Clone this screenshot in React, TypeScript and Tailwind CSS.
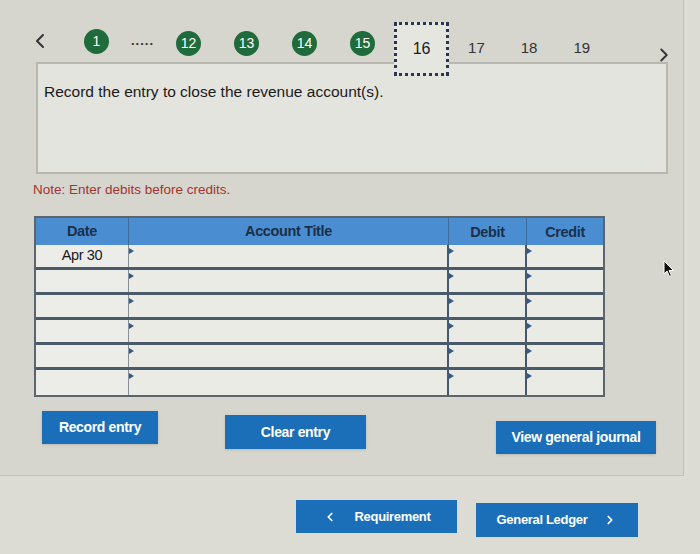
import { ChevronLeft, ChevronRight } from 'lucide-react'

const steps = ['12', '13', '14', '15']

function Circle({ n }: { n: string }) {
  return (
    <div className="w-[25px] h-[25px] rounded-full bg-[#1f6b3b] text-white text-[14px] flex items-center justify-center">
      {n}
    </div>
  )
}

function Cell({ w, last }: { w: string; last?: boolean }) {
  return (
    <div className={`${w} relative h-full bg-[#ebebe6] ${last ? '' : 'border-r-2 border-[#45576a]'}`}>
      {/* input marker */}
      <span className="absolute left-0 top-[3px] w-0 h-0 border-y-[3px] border-y-transparent border-l-[5px] border-l-[#2f5a8a]" />
    </div>
  )
}

export default function App() {
  const rows = ['Apr 30', '', '', '', '', '']

  return (
    <div className="w-[700px] h-[554px] bg-[#dcdcd5] font-['Liberation_Sans',Arial,sans-serif] text-[#1a1a1a] overflow-hidden relative">
      <div className="bg-[#d6d6ce] h-[476px] border-b border-r border-[#c2c2ba] w-[684px] pt-[14px]">
        {/* step navigation */}
        <div className="flex items-center h-[54px] pl-[28px] relative z-10">
          <ChevronLeft className="w-[24px] h-[24px] text-[#333]" strokeWidth={2} />
          <div className="ml-[32px]"><Circle n="1" /></div>
          <div className="ml-[22px] text-[#333] text-[13px] font-bold tracking-[1px]">.....</div>
          <div className="ml-[22px] flex gap-[33px] mt-[4px]">
            {steps.map((s) => (
              <Circle key={s} n={s} />
            ))}
          </div>
          <div className="ml-[19px] mt-[16px] w-[55px] h-[54px] bg-[#e6e6e1] border-[3px] border-dotted border-[#2a3550] flex items-center justify-center text-[16px]">
            16
          </div>
          <div className="ml-[19px] mt-[14px] flex gap-[36px] text-[15px] text-[#333]">
            <span>17</span>
            <span>18</span>
            <span>19</span>
          </div>
          <ChevronRight className="ml-auto mr-[8px] mt-[28px] w-[22px] h-[22px] text-[#333]" strokeWidth={2} />
        </div>

        {/* question */}
        <div className="ml-[36px] -mt-[6px] w-[632px] h-[112px] bg-[#e4e4df] border-2 border-[#b8b8b0] px-[6px] pt-[16px] text-[15.5px]">
          Record the entry to close the revenue account(s).
        </div>
        <div className="ml-[33px] mt-[6px] text-[13.5px] text-[#a5322e]">Note: Enter debits before credits.</div>

        {/* journal table */}
        <div className="ml-[34px] mt-[16px] w-[571px] border-2 border-[#5c6470]">
          <div className="flex h-[27px] bg-[#4a8ed1] text-[14.5px] font-bold text-[#1c2f4a] tracking-tight">
            <div className="w-[93px] flex items-center justify-center border-r border-[#3b6c9c]">Date</div>
            <div className="w-[320px] flex items-center justify-center border-r border-[#3b6c9c]">Account Title</div>
            <div className="w-[78px] flex items-end justify-center pb-[2px] border-r border-[#3b6c9c]">Debit</div>
            <div className="flex-1 flex items-end justify-center pb-[2px]">Credit</div>
          </div>
          {rows.map((d, i) => (
            <div
              key={i}
              className={`flex h-[25px] ${i < rows.length - 1 ? 'border-b-[3px] border-[#4b5a68]' : ''}`}
            >
              <div className="w-[93px] bg-[#ecece8] border-r border-[#8a8f96] flex items-center justify-center text-[14.5px] tracking-tight">
                {d}
              </div>
              <Cell w="w-[320px]" />
              <Cell w="w-[78px]" />
              <Cell w="flex-1" last />
            </div>
          ))}
        </div>

        {/* actions */}
        <div className="flex items-start mt-[14px] text-white font-bold text-[14px] tracking-tight">
          <button className="ml-[42px] w-[116px] h-[33px] bg-[#1b6fb9] shadow-sm">Record entry</button>
          <button className="ml-[67px] mt-[4px] w-[141px] h-[34px] bg-[#1b6fb9] shadow-sm">Clear entry</button>
          <button className="ml-[130px] mt-[10px] w-[160px] h-[33px] bg-[#1b6fb9] shadow-sm">View general journal</button>
        </div>
      </div>

      {/* bottom navigation */}
      <div className="flex items-start mt-[24px] text-white font-bold text-[13px] tracking-tight">
        <button className="ml-[296px] w-[161px] h-[33px] bg-[#1b6fb9] flex items-center justify-center gap-[18px]">
          <ChevronLeft className="w-[14px] h-[14px]" strokeWidth={3} />
          <span>Requirement</span>
        </button>
        <button className="ml-[19px] mt-[3px] w-[162px] h-[34px] bg-[#1b6fb9] flex items-center justify-center gap-[16px]">
          <span>General Ledger</span>
          <ChevronRight className="w-[14px] h-[14px]" strokeWidth={3} />
        </button>
      </div>

      {/* mouse cursor */}
      <svg className="absolute left-[663px] top-[260px]" width="12" height="18" viewBox="0 0 12 18">
        <path d="M1 1 L1 14 L4 11 L6.5 16.5 L8.5 15.5 L6 10.5 L10.5 10.5 Z" fill="#111" stroke="#fff" strokeWidth="1" />
      </svg>
    </div>
  )
}
